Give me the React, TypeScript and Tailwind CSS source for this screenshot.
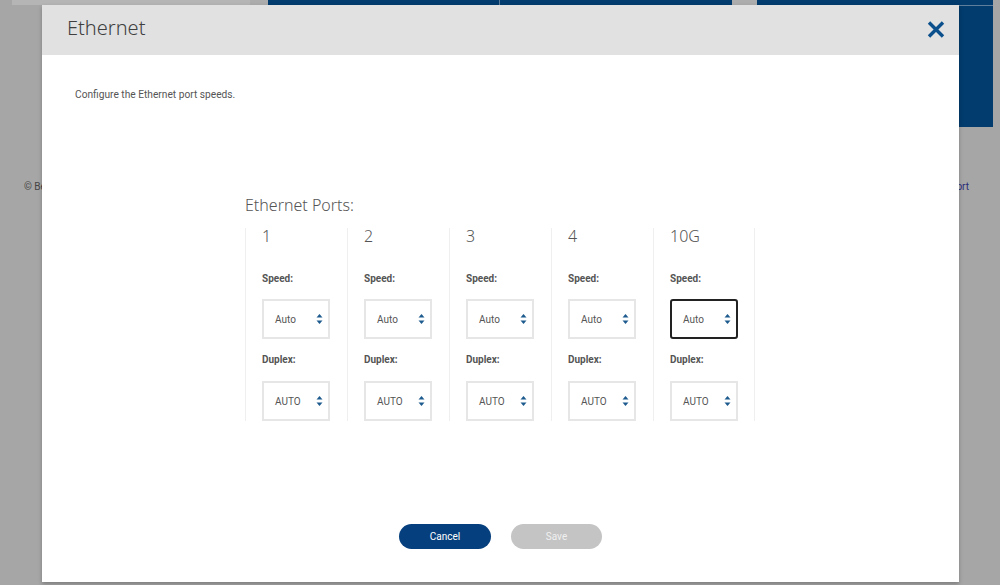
import React from "react";

const ports = ["1", "2", "3", "4", "10G"];

function Arrows() {
  return (
    <svg width="7" height="12" viewBox="0 0 7 12" className="shrink-0">
      <path d="M3.5 1 L6.5 4.5 L0.5 4.5 Z" fill="#1d5a8e" />
      <path d="M3.5 11 L6.5 7.5 L0.5 7.5 Z" fill="#1d5a8e" />
    </svg>
  );
}

function SelectBox({ value, focused }: { value: string; focused?: boolean }) {
  return (
    <div
      className={`flex items-center justify-between w-[68px] h-[40px] pl-[11px] pr-[5px] bg-white ${
        focused ? "border-2 border-[#222] rounded-[3px]" : "border-2 border-[#e6e6e6]"
      }`}
    >
      <span className="text-[10px] text-[#555]">{value}</span>
      <Arrows />
    </div>
  );
}

function PortColumn({ name, last, focused }: { name: string; last?: boolean; focused?: boolean }) {
  return (
    <div className={`w-[102px] border-l border-[#efefef] pl-[16px] ${last ? "border-r" : ""}`}>
      <div className="text-[16px] leading-[16px] text-[#555] font-light font-['Noto_Sans',sans-serif]">{name}</div>
      <div className="mt-[28px] text-[10px] leading-[14px] font-bold text-[#555]">Speed:</div>
      <div className="mt-[13px]">
        <SelectBox value="Auto" focused={focused} />
      </div>
      <div className="mt-[14px] text-[10px] leading-[14px] font-bold text-[#555]">Duplex:</div>
      <div className="mt-[14px]">
        <SelectBox value="AUTO" />
      </div>
    </div>
  );
}

export default function App() {
  return (
    <div className="relative w-[1000px] h-[585px] overflow-hidden bg-[#a6a6a6] font-['Roboto',sans-serif]">
      {/* page behind the overlay */}
      <div className="flex items-start">
        <div className="w-[12px]" />
        <div className="w-[238px] h-[5px] bg-[#b5b5b5]" />
        <div className="w-[18px] h-[5px] bg-[#acacac]" />
        <div className="w-[232px] h-[60px] bg-[#023c6e] border-r border-[#5e7e9c]" />
        <div className="w-[232px] h-[60px] bg-[#023c6e]" />
        <div className="w-[25px] h-[5px] bg-[#adadad]" />
        <div className="w-[236px] h-[127px] bg-[#023c6e] flex flex-col">
          <div className="h-[5px]" />
          <div className="h-px bg-[#5e7e9c]" />
        </div>
      </div>
      <div className="flex justify-between mt-[52px] pl-[24px] pr-[31px] text-[10px]">
        <span className="text-[#444]">© Bell Canada</span>
        <span className="text-[#2b2b78]">Support</span>
      </div>

      {/* modal */}
      <div className="absolute left-[42px] top-[5px] w-[917px] h-[577px] bg-white flex flex-col shadow-[0_2px_4px_rgba(0,0,0,0.25)]">
        <div className="h-[50px] bg-[#e1e1e1] flex items-center justify-between pl-[25px] pr-[14px]">
          <span className="text-[20px] leading-[24px] mb-[4px] text-[#3f3f3f] font-light font-['Noto_Sans',sans-serif]">Ethernet</span>
          <svg width="18" height="17" viewBox="0 0 18 17" className="mb-[2px]">
            <path d="M2 1.5 L16 15.5 M16 1.5 L2 15.5" stroke="#0b4f8c" strokeWidth="3.4" strokeLinecap="butt" />
          </svg>
        </div>

        <p className="mt-[32px] pl-[33px] text-[10.2px] leading-[16px] text-[#555]">
          Configure the Ethernet port speeds.
        </p>

        <div className="mx-auto w-[511px] mt-[91px]">
          <div className="text-[16px] leading-[22px] text-[#555] font-light font-['Noto_Sans',sans-serif]">Ethernet Ports:</div>
          <div className="flex mt-[12px]">
            {ports.map((p, i) => (
              <PortColumn key={p} name={p} last={i === ports.length - 1} focused={i === ports.length - 1} />
            ))}
          </div>
        </div>

        <div className="flex justify-center gap-[20px] mt-[103px]">
          <button className="w-[92px] h-[25px] rounded-full bg-[#063f7d] text-white text-[10px]">Cancel</button>
          <button className="w-[91px] h-[25px] rounded-full bg-[#c4c4c4] text-[#f0f0f0] text-[10px]">Save</button>
        </div>
      </div>
    </div>
  );
}
